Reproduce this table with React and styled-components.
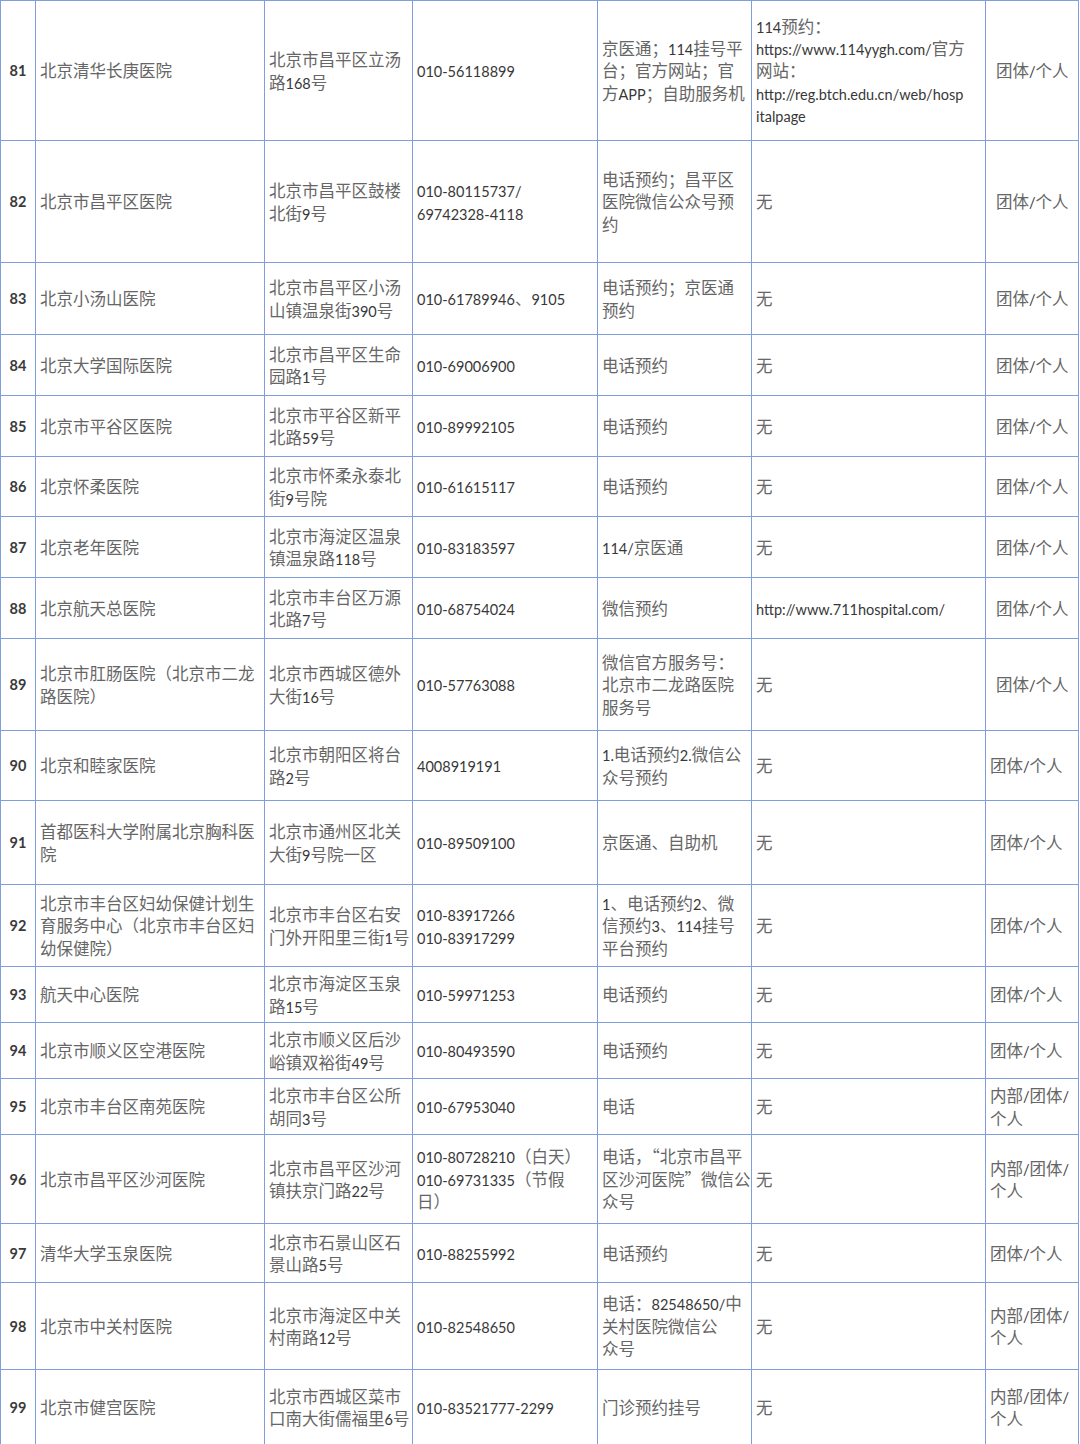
import React from "react";
import styled, { createGlobalStyle } from "styled-components";

const GlobalStyle = createGlobalStyle`
  html, body {
    margin: 0;
    padding: 0;
    background: #ffffff;
  }
`;

// column widths, taken from the grid lines of the sheet
const COLS = [35, 229, 148, 185, 154, 234, 93];

// each cell: lines split by "|"
const ROWS = [
  { no: 81, h: 140, cells: ["北京清华长庚医院", "北京市昌平区立汤|路168号", "010-56118899", "京医通；114挂号平|台；官方网站；官|方APP；自助服务机", "114预约：|https://www.114yygh.com/官方|网站：|http://reg.btch.edu.cn/web/hosp|italpage", "团体/个人"], wide: true },
  { no: 82, h: 122, cells: ["北京市昌平区医院", "北京市昌平区鼓楼|北街9号", "010-80115737/|69742328-4118", "电话预约；昌平区|医院微信公众号预|约", "无", "团体/个人"], wide: true },
  { no: 83, h: 72, cells: ["北京小汤山医院", "北京市昌平区小汤|山镇温泉街390号", "010-61789946、9105", "电话预约；京医通|预约", "无", "团体/个人"], wide: true },
  { no: 84, h: 61, cells: ["北京大学国际医院", "北京市昌平区生命|园路1号", "010-69006900", "电话预约", "无", "团体/个人"], wide: true },
  { no: 85, h: 61, cells: ["北京市平谷区医院", "北京市平谷区新平|北路59号", "010-89992105", "电话预约", "无", "团体/个人"], wide: true },
  { no: 86, h: 60, cells: ["北京怀柔医院", "北京市怀柔永泰北|街9号院", "010-61615117", "电话预约", "无", "团体/个人"], wide: true },
  { no: 87, h: 61, cells: ["北京老年医院", "北京市海淀区温泉|镇温泉路118号", "010-83183597", "114/京医通", "无", "团体/个人"], wide: true },
  { no: 88, h: 61, cells: ["北京航天总医院", "北京市丰台区万源|北路7号", "010-68754024", "微信预约", "http://www.711hospital.com/", "团体/个人"], wide: true },
  { no: 89, h: 92, cells: ["北京市肛肠医院（北京市二龙|路医院）", "北京市西城区德外|大街16号", "010-57763088", "微信官方服务号：|北京市二龙路医院|服务号", "无", "团体/个人"], wide: true },
  { no: 90, h: 70, cells: ["北京和睦家医院", "北京市朝阳区将台|路2号", "4008919191", "1.电话预约2.微信公|众号预约", "无", "团体/个人"] },
  { no: 91, h: 84, cells: ["首都医科大学附属北京胸科医|院", "北京市通州区北关|大街9号院一区", "010-89509100", "京医通、自助机", "无", "团体/个人"] },
  { no: 92, h: 82, cells: ["北京市丰台区妇幼保健计划生|育服务中心（北京市丰台区妇|幼保健院）", "北京市丰台区右安|门外开阳里三街1号", "010-83917266|010-83917299", "1、电话预约2、微|信预约3、114挂号|平台预约", "无", "团体/个人"] },
  { no: 93, h: 56, cells: ["航天中心医院", "北京市海淀区玉泉|路15号", "010-59971253", "电话预约", "无", "团体/个人"] },
  { no: 94, h: 56, cells: ["北京市顺义区空港医院", "北京市顺义区后沙|峪镇双裕街49号", "010-80493590", "电话预约", "无", "团体/个人"] },
  { no: 95, h: 56, cells: ["北京市丰台区南苑医院", "北京市丰台区公所|胡同3号", "010-67953040", "电话", "无", "内部/团体/|个人"] },
  { no: 96, h: 89, cells: ["北京市昌平区沙河医院", "北京市昌平区沙河|镇扶京门路22号", "010-80728210（白天）|010-69731335（节假|日）", "电话，“北京市昌平|区沙河医院”微信公|众号", "无", "内部/团体/|个人"] },
  { no: 97, h: 59, cells: ["清华大学玉泉医院", "北京市石景山区石|景山路5号", "010-88255992", "电话预约", "无", "团体/个人"] },
  { no: 98, h: 87, cells: ["北京市中关村医院", "北京市海淀区中关|村南路12号", "010-82548650", "电话：82548650/中|关村医院微信公|众号", "无", "内部/团体/|个人"] },
  { no: 99, h: 75, cells: ["北京市健宫医院", "北京市西城区菜市|口南大街儒福里6号", "010-83521777-2299", "门诊预约挂号", "无", "内部/团体/|个人"] },
];

// split a line into latin / cjk runs so each gets its own font
const renderLine = (line) =>
  line
    .split(/([\x20-\x7E]+)/)
    .filter(Boolean)
    .map((seg, i) =>
      /^[\x20-\x7E]+$/.test(seg) ? <Lat key={i}>{seg}</Lat> : <span key={i}>{seg}</span>
    );

const renderCell = (text) =>
  text.split("|").map((line, i) => <Line key={i}>{renderLine(line)}</Line>);

const App = () => {
  return (
    <>
      <GlobalStyle />
      <Sheet>
        <colgroup>
          {COLS.map((w, i) => (
            <col key={i} style={{ width: w }} />
          ))}
        </colgroup>
        <tbody>
          {ROWS.map((row) => (
            <Row key={row.no} $h={row.h}>
              <NumCell>{row.no}</NumCell>
              {row.cells.map((c, i) => (
                <Cell key={i} $pl={i === 5 ? (row.wide ? 10 : 4) : 4}>
                  {renderCell(c)}
                </Cell>
              ))}
            </Row>
          ))}
        </tbody>
      </Sheet>
    </>
  );
};

// Styled Components

const Sheet = styled.table`
  width: 1078px;
  table-layout: fixed;
  border-collapse: collapse;
  border: 1px solid #7f9edb;
`;

const Row = styled.tr`
  height: ${(p) => p.$h}px;
`;

const Cell = styled.td`
  border: 1px solid #7f9edb;
  padding: 0 0 0 ${(p) => p.$pl}px;
  vertical-align: middle;
  font-family: "Noto Sans CJK SC", "Noto Sans", sans-serif;
  font-size: 16.5px;
  line-height: 22.5px;
  color: #666666;
  white-space: nowrap;
  overflow: hidden;
`;

const NumCell = styled.td`
  border: 1px solid #7f9edb;
  padding: 0;
  text-align: center;
  vertical-align: middle;
  font-family: "Lato", "Liberation Sans", sans-serif;
  font-size: 14.5px;
  font-weight: 700;
  color: #3a3a3a;
`;

const Line = styled.div`
  display: block;
  height: 22.4px;
  line-height: 22.4px;
`;

const Lat = styled.span`
  font-family: "Lato", "Liberation Sans", sans-serif;
  font-size: 14.5px;
  line-height: 1;
  color: #383838;
`;

export default App;
